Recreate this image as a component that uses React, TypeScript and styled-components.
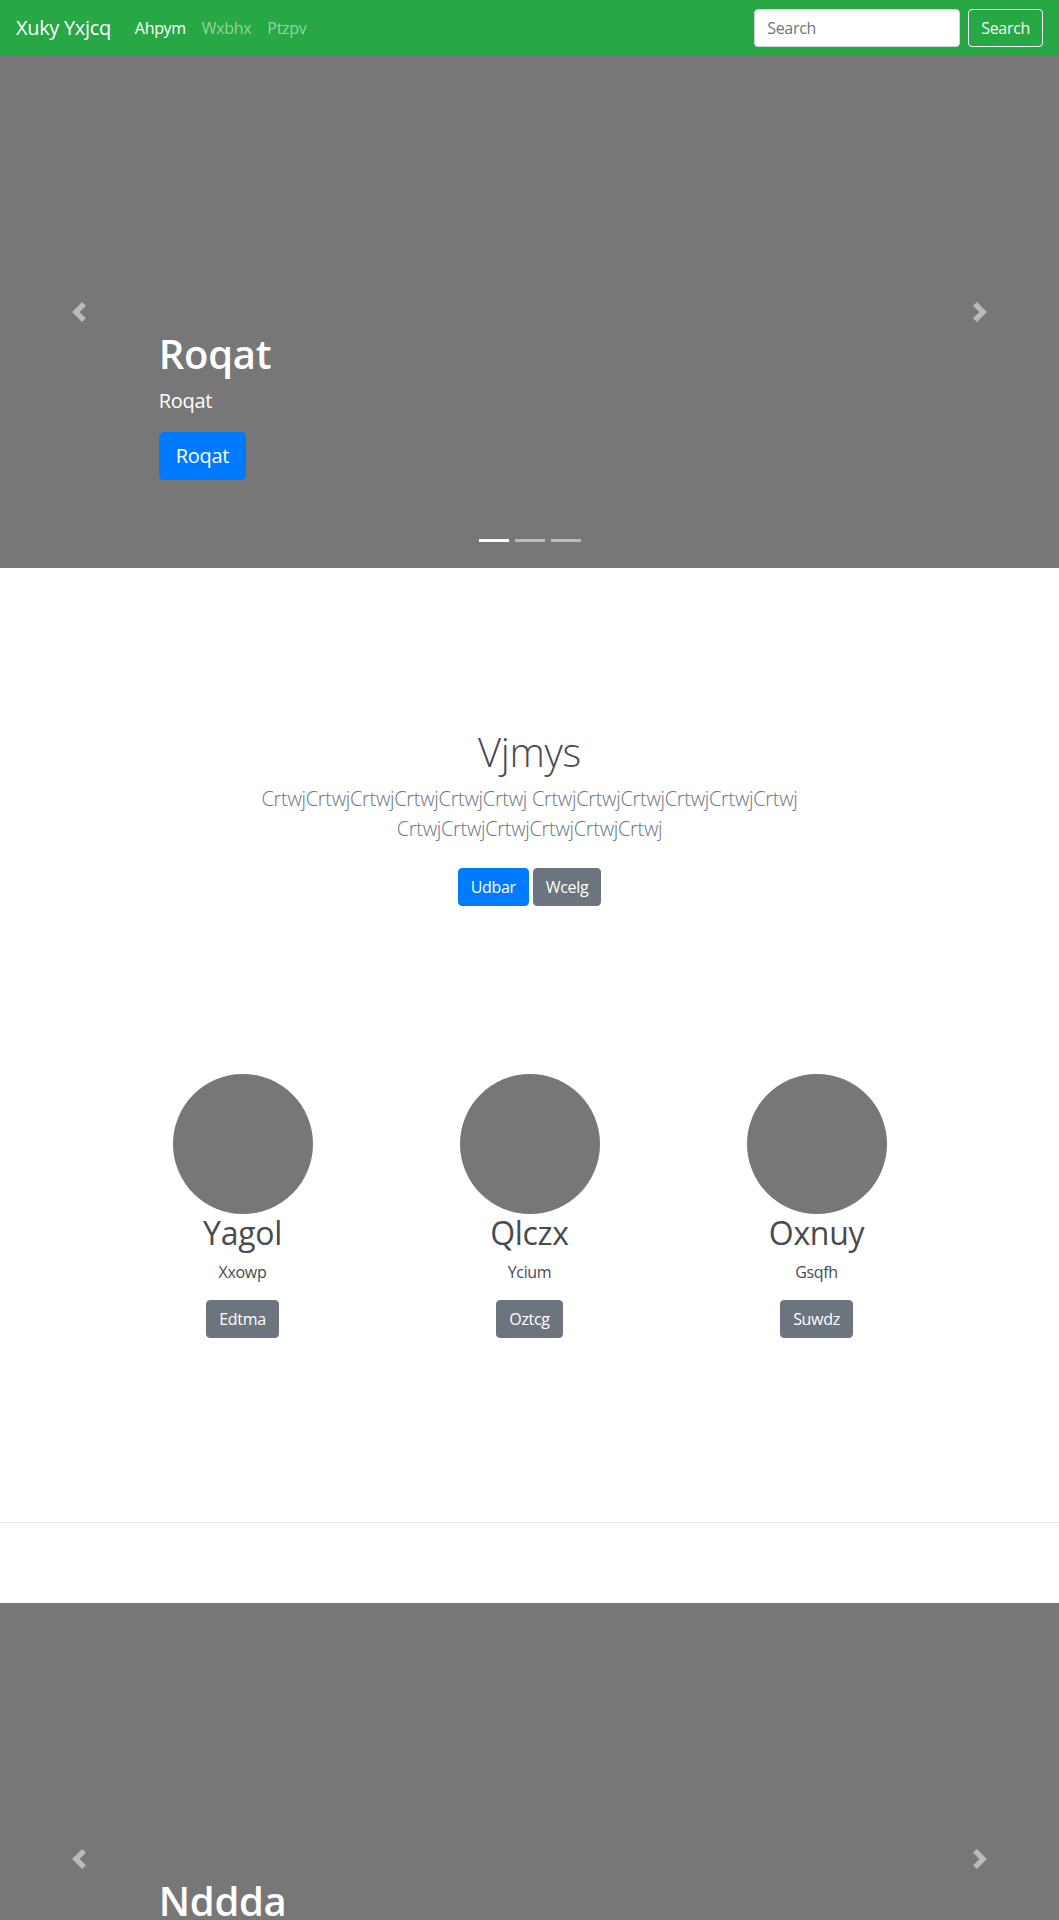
import React from "react";
import styled, { createGlobalStyle } from "styled-components";

const GlobalStyle = createGlobalStyle`
  *, *::before, *::after { box-sizing: border-box; }
  html, body { margin: 0; padding: 0; }
  body {
    font-family: "Segoe UI", "Open Sans", "Noto Sans", Arial, sans-serif;
    font-size: 16px;
    line-height: 1.5;
    letter-spacing: -0.02em;
    color: #484b4f;
    background: #fff;
  }
  h1, h2, p { margin: 0; }
`;

const Navbar = styled.nav`
  display: flex;
  align-items: center;
  height: 56px;
  padding: 8px 16px;
  background: #28a745;
`;

const Brand = styled.a`
  font-size: 20px;
  line-height: 30px;
  padding: 5px 0;
  margin-right: 16px;
  color: #fff;
  text-decoration: none;
  white-space: nowrap;
`;

const NavList = styled.ul`
  display: flex;
  flex: 1;
  list-style: none;
  margin: 0;
  padding: 0;
`;

const NavLink = styled.a<{ $active?: boolean }>`
  display: block;
  padding: 8px;
  font-size: 16px;
  line-height: 24px;
  color: ${(p) => (p.$active ? "#fff" : "rgba(255,255,255,0.5)")};
  text-decoration: none;
`;

const SearchForm = styled.form`
  display: flex;
  align-items: center;
  gap: 8px;
`;

const SearchInput = styled.input`
  width: 206px;
  height: 38px;
  padding: 6px 12px;
  font-family: inherit;
  font-size: 16px;
  letter-spacing: inherit;
  color: #495057;
  background: #fff;
  border: 1px solid #ced4da;
  border-radius: 4px;
  &::placeholder { color: #6c757d; }
`;

const OutlineButton = styled.button`
  height: 38px;
  padding: 6px 12px;
  font-family: inherit;
  font-size: 16px;
  letter-spacing: inherit;
  line-height: 24px;
  color: #f8f9fa;
  background: transparent;
  border: 1px solid #f8f9fa;
  border-radius: 4px;
`;

const Carousel = styled.section`
  position: relative;
  height: 512px;
  background: #777;
  overflow: hidden;
`;

const Caption = styled.div`
  position: absolute;
  left: 15%;
  right: 15%;
  bottom: 48px;
  padding: 20px 0;
  color: #fff;
  text-align: left;
  z-index: 10;
`;

const CaptionTitle = styled.h1`
  font-size: 40px;
  line-height: 1.2;
  font-weight: 600;
  margin-bottom: 8px;
`;

const CaptionText = styled.p`
  font-size: 20px;
  line-height: 30px;
  margin-bottom: 16px;
`;

const CaptionActions = styled.div`
  display: flex;
  margin-bottom: 20px;
`;

const Button = styled.a<{ $variant: "primary" | "secondary"; $large?: boolean }>`
  display: inline-block;
  padding: ${(p) => (p.$large ? "8px 16px" : "6px 12px")};
  font-size: ${(p) => (p.$large ? "20px" : "16px")};
  line-height: 1.5;
  color: #fff;
  background: ${(p) => (p.$variant === "primary" ? "#007bff" : "#6c757d")};
  border: 1px solid ${(p) => (p.$variant === "primary" ? "#007bff" : "#6c757d")};
  border-radius: ${(p) => (p.$large ? "4.8px" : "4px")};
  text-decoration: none;
  white-space: nowrap;
`;

const Control = styled.a<{ $side: "left" | "right" }>`
  position: absolute;
  top: 0;
  bottom: 0;
  ${(p) => (p.$side === "left" ? "left: 0;" : "right: 0;")}
  width: 15%;
  display: flex;
  align-items: center;
  justify-content: center;
  opacity: 0.5;
  z-index: 5;
`;

const Indicators = styled.ol`
  position: absolute;
  left: 0;
  right: 0;
  bottom: 0;
  display: flex;
  justify-content: center;
  list-style: none;
  margin: 0 15% 16px;
  padding: 0;
  z-index: 15;
`;

const Indicator = styled.li<{ $active?: boolean }>`
  width: 30px;
  height: 3px;
  margin: 10px 3px;
  background: #fff;
  opacity: ${(p) => (p.$active ? 1 : 0.5)};
`;

const Jumbotron = styled.section`
  padding: 160px 0;
  text-align: center;
`;

const JumboContainer = styled.div`
  max-width: 640px;
  margin: 0 auto;
  padding: 0 15px;
`;

const JumboHeading = styled.h1`
  font-size: 40px;
  line-height: 1.2;
  font-weight: 300;
  margin-bottom: 8px;
`;

const Lead = styled.p`
  font-size: 20px;
  line-height: 30px;
  font-weight: 300;
  color: #6c757d;
  margin-bottom: 16px;
`;

const JumboActions = styled.div`
  display: flex;
  justify-content: center;
  gap: 4px;
  padding: 8px 0;
`;

const Marketing = styled.section`
  display: grid;
  grid-template-columns: repeat(3, 287px);
  justify-content: center;
  padding-bottom: 64px;
`;

const Member = styled.div`
  display: flex;
  flex-direction: column;
  align-items: center;
  text-align: center;
  margin-bottom: 24px;
`;

const Avatar = styled.div`
  width: 140px;
  height: 140px;
  border-radius: 50%;
  background: #777;
`;

const MemberName = styled.h2`
  font-size: 32px;
  line-height: 1.2;
  font-weight: 400;
  margin-bottom: 8px;
`;

const MemberRole = styled.p`
  margin-bottom: 16px;
`;

const MemberAction = styled.div`
  margin-bottom: 16px;
`;

const Divider = styled.hr`
  margin: 80px 0;
  border: 0;
  border-top: 1px solid rgba(0, 0, 0, 0.1);
`;

const ChevronLeft = () => (
  <svg width="20" height="20" viewBox="0 0 8 8" fill="#fff">
    <path d="M5.25 0l-4 4 4 4 1.5-1.5L4.25 4l2.5-2.5L5.25 0z" />
  </svg>
);

const ChevronRight = () => (
  <svg width="20" height="20" viewBox="0 0 8 8" fill="#fff">
    <path d="M2.75 0l-1.5 1.5L3.75 4l-2.5 2.5L2.75 8l4-4-4-4z" />
  </svg>
);

const Slide = ({ title }: { title: string }) => (
  <Carousel>
    <Control $side="left" href="#">
      <ChevronLeft />
    </Control>
    <Caption>
      <CaptionTitle>{title}</CaptionTitle>
      <CaptionText>{title}</CaptionText>
      <CaptionActions>
        <Button $variant="primary" $large href="#">
          {title}
        </Button>
      </CaptionActions>
    </Caption>
    <Control $side="right" href="#">
      <ChevronRight />
    </Control>
    <Indicators>
      {[0, 1, 2].map((i) => (
        <Indicator key={i} $active={i === 0} />
      ))}
    </Indicators>
  </Carousel>
);

const team = [
  { name: "Yagol", role: "Xxowp", action: "Edtma" },
  { name: "Qlczx", role: "Ycium", action: "Oztcg" },
  { name: "Oxnuy", role: "Gsqfh", action: "Suwdz" },
];

const word = "CrtwjCrtwjCrtwjCrtwjCrtwjCrtwj";

export default function App() {
  return (
    <>
      <GlobalStyle />
      <Navbar>
        <Brand href="#">Xuky Yxjcq</Brand>
        <NavList>
          <li><NavLink $active href="#">Ahpym</NavLink></li>
          <li><NavLink href="#">Wxbhx</NavLink></li>
          <li><NavLink href="#">Ptzpv</NavLink></li>
        </NavList>
        <SearchForm onSubmit={(e) => e.preventDefault()}>
          <SearchInput type="text" placeholder="Search" />
          <OutlineButton type="submit">Search</OutlineButton>
        </SearchForm>
      </Navbar>

      <Slide title="Roqat" />

      <Jumbotron>
        <JumboContainer>
          <JumboHeading>Vjmys</JumboHeading>
          <Lead>{`${word} ${word} ${word}`}</Lead>
          <JumboActions>
            <Button $variant="primary" href="#">Udbar</Button>
            <Button $variant="secondary" href="#">Wcelg</Button>
          </JumboActions>
        </JumboContainer>
      </Jumbotron>

      <Marketing>
        {team.map((m) => (
          <Member key={m.name}>
            <Avatar />
            <MemberName>{m.name}</MemberName>
            <MemberRole>{m.role}</MemberRole>
            <MemberAction>
              <Button $variant="secondary" href="#">{m.action}</Button>
            </MemberAction>
          </Member>
        ))}
      </Marketing>

      <Divider />

      <Slide title="Nddda" />
    </>
  );
}
